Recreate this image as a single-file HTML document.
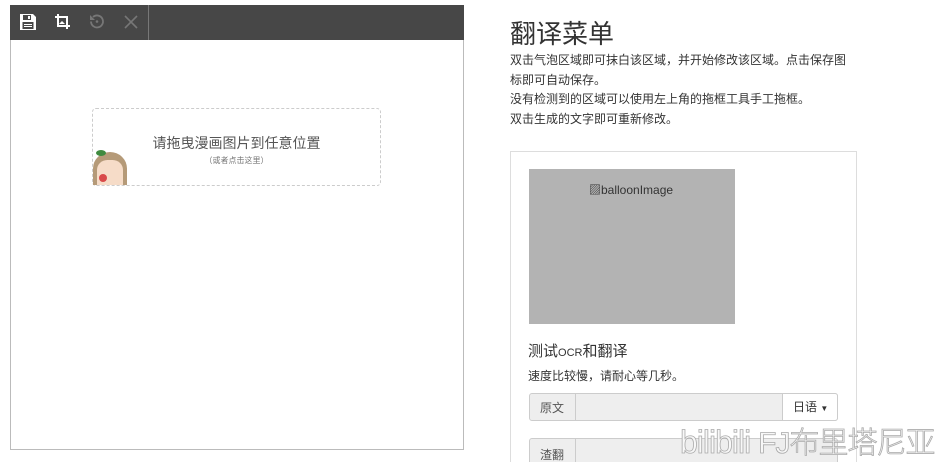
<!DOCTYPE html>
<html style="width:942px;height:462px;overflow:hidden"><head><meta charset="utf-8"><style>
*{box-sizing:border-box;margin:0;padding:0}
body{width:942px;height:462px;overflow:hidden;background:#fff;font-family:"Liberation Sans","Noto Sans CJK SC",sans-serif;color:#333;position:relative}
.abs{position:absolute}
</style></head><body>
<div class="abs" style="left:10px;top:5px;width:454px;height:445px;border:1px solid #bbb;border-top:none"></div>
<div class="abs" style="left:10px;top:5px;width:454px;height:35px;background:#474747"></div>
<div class="abs" style="left:148px;top:5px;width:1px;height:35px;background:#777"></div>
<svg class="abs" style="left:19px;top:13px" width="18" height="18" viewBox="0 0 18 18"><path d="M1 1h13l3 3v13H1z" fill="#fff"/><rect x="4" y="2" width="8" height="5" fill="#474747"/><rect x="9" y="3" width="2" height="3" fill="#fff"/><rect x="3.5" y="9" width="11" height="7" fill="#474747"/><rect x="5" y="11" width="8" height="1" fill="#fff"/><rect x="5" y="13" width="8" height="1" fill="#fff"/></svg>
<svg class="abs" style="left:54px;top:13px" width="17" height="17" viewBox="0 0 17 17"><path d="M4 1v12h12M1 4h12v12" fill="none" stroke="#fff" stroke-width="2"/><path d="M5 11l3-3 3 3z" fill="#fff"/></svg>
<svg class="abs" style="left:88px;top:13px" width="17" height="17" viewBox="0 0 17 17"><path d="M3 8.5a6 6 0 1 0 2-4.5" fill="none" stroke="#777" stroke-width="1.8"/><path d="M2 2v5h5z" fill="#777"/><circle cx="9" cy="8.5" r="1.3" fill="#777"/></svg>
<svg class="abs" style="left:124px;top:15px" width="14" height="14" viewBox="0 0 14 14"><path d="M1 1l12 12M13 1L1 13" stroke="#777" stroke-width="1.6"/></svg>
<div class="abs" style="left:92px;top:108px;width:289px;height:78px;border:1px dashed #ccc;border-radius:4px"></div>
<div class="abs" style="left:92px;top:133px;width:289px;text-align:center;font-size:14px;color:#555">请拖曳漫画图片到任意位置</div>
<div class="abs" style="left:92px;top:155px;width:289px;text-align:center;font-size:8px;color:#777">（或者点击这里）</div>
<div class="abs" style="left:93px;top:152px;width:34px;height:33px;border-radius:50% 50% 0 0;background:#b59a78"></div>
<div class="abs" style="left:97px;top:160px;width:26px;height:25px;border-radius:40% 40% 0 0;background:#f6dcc8"></div>
<div class="abs" style="left:96px;top:150px;width:10px;height:6px;border-radius:50%;background:#3f8a3f"></div>
<div class="abs" style="left:99px;top:174px;width:8px;height:8px;border-radius:50%;background:#d94a4a"></div>

<div class="abs" style="left:510px;top:14px;font-size:26px;color:#333">翻译菜单</div>
<div class="abs" style="left:510px;top:51px;font-size:12px;line-height:19.7px;color:#333;width:350px">双击气泡区域即可抹白该区域，并开始修改该区域。点击保存图<br>标即可自动保存。<br>没有检测到的区域可以使用左上角的拖框工具手工拖框。<br>双击生成的文字即可重新修改。</div>
<div class="abs" style="left:510px;top:151px;width:347px;height:320px;border:1px solid #ddd"></div>
<div class="abs" style="left:529px;top:169px;width:206px;height:155px;background:#b3b3b3"></div>
<div class="abs" style="left:589px;top:181px;font-size:12px;color:#333">▨balloonImage</div>
<div class="abs" style="left:528px;top:340px;font-size:15px;color:#333">测试<span style="font-size:11px">OCR</span>和翻译</div>
<div class="abs" style="left:528px;top:367px;font-size:12px;color:#333">速度比较慢，请耐心等几秒。</div>
<div class="abs" style="left:529px;top:393px;width:309px;height:28px;border:1px solid #ccc;border-radius:3px;background:#eee"></div>
<div class="abs" style="left:575px;top:393px;width:1px;height:28px;background:#ccc"></div>
<div class="abs" style="left:782px;top:393px;width:56px;height:28px;border:1px solid #ccc;border-radius:0 3px 3px 0;background:#fff;font-size:12px;line-height:26px;padding-left:10px">日语 <span style="font-size:8px">▼</span></div>
<div class="abs" style="left:540px;top:399px;font-size:12px;color:#555">原文</div>
<div class="abs" style="left:529px;top:438px;width:309px;height:30px;border:1px solid #ccc;border-radius:3px;background:#eee"></div>
<div class="abs" style="left:575px;top:438px;width:1px;height:30px;background:#ccc"></div>
<div class="abs" style="left:540px;top:446px;font-size:12px;color:#555">渣翻</div>
<div class="abs" style="left:680px;top:418px;font-size:32px;color:#f8f8f8;-webkit-text-stroke:0.8px #aaa;letter-spacing:-1px;white-space:nowrap;font-weight:300">bilibili <span style="font-size:30px">FJ布里塔尼亚</span></div>
</body></html>
